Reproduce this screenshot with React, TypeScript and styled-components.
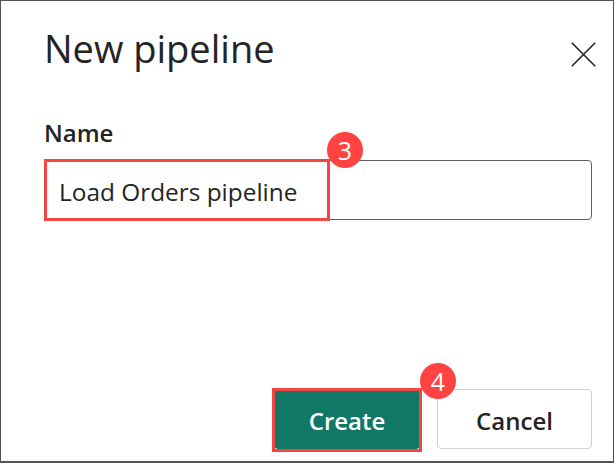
import React from "react";
import styled, { createGlobalStyle } from "styled-components";

const GlobalStyle = createGlobalStyle`
  html, body {
    margin: 0;
    padding: 0;
    background: #ffffff;
  }
  body {
    font-family: "Open Sans", "Noto Sans", sans-serif;
    color: #242424;
  }
  * { box-sizing: border-box; }
`;

const Dialog = styled.div`
  width: 614px;
  height: 463px;
  background: #ffffff;
  border: 1px solid #545454;
  border-bottom-width: 2px;
  padding: 21px 21px 12px 43px;
  display: flex;
  flex-direction: column;
`;

const Header = styled.div`
  display: flex;
  justify-content: space-between;
  align-items: flex-start;
`;

const Title = styled.h2`
  margin: 0;
  font-size: 38px;
  line-height: 52px;
  font-weight: 400;
  color: #242424;
`;

const CloseButton = styled.button`
  border: none;
  background: transparent;
  padding: 0;
  margin: 20px -4px 0 0;
  width: 25px;
  height: 25px;
  display: flex;
  cursor: pointer;
`;

const Label = styled.label`
  display: block;
  margin-top: 43px;
  font-size: 24px;
  line-height: 32px;
  font-weight: 600;
  color: #242424;
`;

const Field = styled.div`
  position: relative;
  margin-top: 11px;
`;

const TextInput = styled.div`
  height: 60px;
  border: 1px solid #616161;
  border-radius: 4px;
  padding: 2px 14px 0;
  display: flex;
  align-items: center;
  font-size: 24.4px;
  color: #242424;
`;

const Highlight = styled.div<{ $left: number; $top: number; $w: number; $h: number }>`
  position: absolute;
  left: ${(p) => p.$left}px;
  top: ${(p) => p.$top}px;
  width: ${(p) => p.$w}px;
  height: ${(p) => p.$h}px;
  border: 3px solid #f44545;
  pointer-events: none;
`;

const Badge = styled.div<{ $left: number; $top: number }>`
  position: absolute;
  left: ${(p) => p.$left}px;
  top: ${(p) => p.$top}px;
  width: 36px;
  height: 36px;
  border-radius: 50%;
  background: #ff4242;
  color: #ffffff;
  display: flex;
  align-items: center;
  justify-content: center;
  font-size: 25px;
  font-weight: 400;
  line-height: 1;
  z-index: 2;
`;

const Footer = styled.div`
  margin-top: auto;
  display: flex;
  justify-content: flex-end;
  gap: 17px;
`;

const ButtonWrap = styled.div`
  position: relative;
`;

const Button = styled.button<{ $primary?: boolean; $w: number }>`
  width: ${(p) => p.$w}px;
  height: 60px;
  border-radius: 4px;
  border: 1px solid ${(p) => (p.$primary ? "#117865" : "#d1d1d1")};
  background: ${(p) => (p.$primary ? "#117865" : "#ffffff")};
  color: ${(p) => (p.$primary ? "#ffffff" : "#242424")};
  font-family: "Open Sans", "Noto Sans", sans-serif;
  font-size: 24px;
  font-weight: 600;
  padding: 3px 0 0 0;
  cursor: pointer;
`;

const CloseIcon = () => (
  <svg width="25" height="25" viewBox="0 0 25 25" fill="none">
    <path d="M0.8 0.8 L24.2 24.2 M24.2 0.8 L0.8 24.2" stroke="#242424" strokeWidth="1.6" />
  </svg>
);

export default function App() {
  return (
    <>
      <GlobalStyle />
      <Dialog>
        <Header>
          <Title>New pipeline</Title>
          <CloseButton aria-label="Close">
            <CloseIcon />
          </CloseButton>
        </Header>
        <Label>Name</Label>
        <Field>
          <TextInput>Load Orders pipeline</TextInput>
          <Highlight $left={0} $top={-1} $w={286} $h={62} />
          <Badge $left={283} $top={-28}>3</Badge>
        </Field>
        <Footer>
          <ButtonWrap>
            <Button $primary $w={146}>Create</Button>
            <Highlight $left={-2} $top={-1} $w={150} $h={64} />
            <Badge $left={146} $top={-26}>4</Badge>
          </ButtonWrap>
          <ButtonWrap>
            <Button $w={155}>Cancel</Button>
          </ButtonWrap>
        </Footer>
      </Dialog>
    </>
  );
}
